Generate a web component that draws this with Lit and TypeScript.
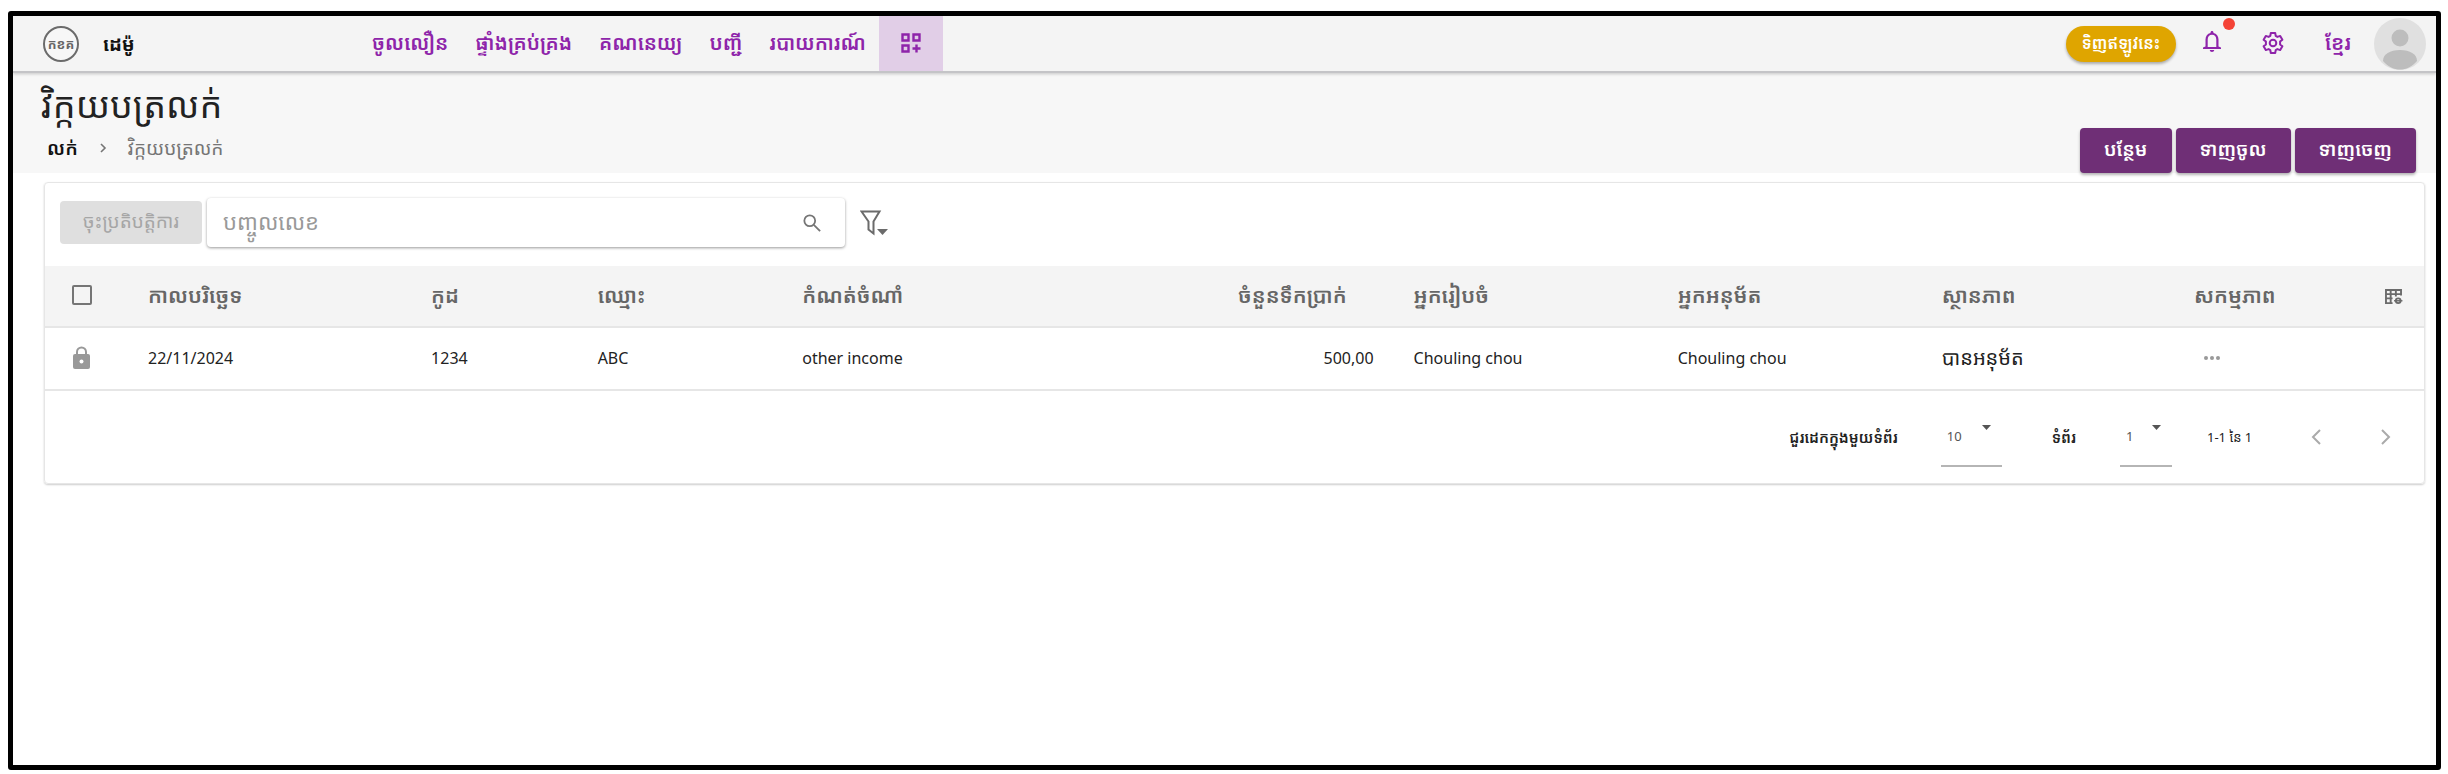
import { LitElement, html, css } from "lit";
import { customElement, state } from "lit/decorators.js";

const COLUMNS = [
  { key: "date", label: "កាលបរិច្ឆេទ" },
  { key: "code", label: "កូដ" },
  { key: "name", label: "ឈ្មោះ" },
  { key: "memo", label: "កំណត់ចំណាំ" },
  { key: "amount", label: "ចំនួនទឹកប្រាក់" },
  { key: "preparer", label: "អ្នករៀបចំ" },
  { key: "approver", label: "អ្នកអនុម័ត" },
  { key: "status", label: "ស្ថានភាព" },
];

const ROWS: Record<string, string>[] = [
  {
    date: "22/11/2024",
    code: "1234",
    name: "ABC",
    memo: "other income",
    amount: "500,00",
    preparer: "Chouling chou",
    approver: "Chouling chou",
    status: "បានអនុម័ត",
  },
];

const NAV = ["ចូលលឿន", "ផ្ទាំងគ្រប់គ្រង", "គណនេយ្យ", "បញ្ជី", "របាយការណ៍"];

@customElement("app-root")
export class AppRoot extends LitElement {
  @state() private query = "";

  static styles = css`
    :host {
      display: block;
      box-sizing: border-box;
      min-height: 100vh;
      padding: 11px 7px 4px 8px;
      background: #fff;
      color: #222;
      font-family: "Noto Sans", "Noto Sans Khmer", sans-serif;
      font-size: 16px;
      line-height: 24px;
    }
    * { box-sizing: border-box; }
    button, input, select { font: inherit; color: inherit; margin: 0; }
    button { display: block; border: 0; background: none; padding: 0; cursor: pointer; white-space: nowrap; }
    a { color: inherit; text-decoration: none; }
    svg { display: block; }
    .frame {
      min-height: calc(100vh - 15px);
      border: 5px solid #000;
      border-radius: 3px;
    }
    .bar {
      position: relative;
      display: flex;
      align-items: center;
      height: 57px;
      padding: 0 10px 0 30px;
      border-bottom: 2px solid #c4c4c7;
      background: #f4f4f4;
      box-shadow: 0 1px 3px rgba(0, 0, 0, 0.2);
    }
    .brand {
      display: flex;
      align-items: center;
      gap: 24px;
      width: 329px;
      color: #111;
      font-size: 19px;
      font-weight: 700;
    }
    .logo {
      display: grid;
      place-items: center;
      width: 36px;
      height: 36px;
      border: 2px solid #6b6b6b;
      border-radius: 50%;
      background: #f7f7f7;
      color: #666;
      font-size: 13px;
    }
    nav {
      display: flex;
      align-items: center;
      align-self: stretch;
      gap: 27px;
      color: #8e24aa;
      font-size: 20px;
      font-weight: 600;
      white-space: nowrap;
    }
    nav a, .lang { padding-bottom: 2px; }
    .more {
      display: grid;
      place-items: center;
      align-self: stretch;
      width: 64px;
      margin-left: -14px;
      padding-bottom: 2px;
      background: #e1cee7;
      color: #8e24aa;
    }
    .tools {
      display: flex;
      align-items: center;
      margin-left: auto;
      color: #8e24aa;
    }
    .buy {
      width: 110px;
      height: 36px;
      margin-right: 24px;
      padding-bottom: 2px;
      border-radius: 18px;
      background: #dfa500;
      box-shadow: 0 2px 3px rgba(0, 0, 0, 0.3);
      color: #fff;
      font-weight: 600;
    }
    .bell { position: relative; margin-right: 37px; }
    .dot {
      position: absolute;
      top: -12px;
      right: -11px;
      width: 12px;
      height: 12px;
      border-radius: 50%;
      background: #f44336;
    }
    .gear { margin-right: 40px; padding-bottom: 2px; }
    .lang { width: 24px; margin-right: 25px; font-size: 20px; font-weight: 600; }
    .head {
      display: flex;
      align-items: flex-end;
      justify-content: space-between;
      padding: 4px 20px 0 28px;
      background: #f7f7f7;
    }
    h1 {
      margin: 0;
      color: #222;
      font-size: 36px;
      font-weight: 400;
      line-height: 56px;
    }
    .crumbs {
      display: flex;
      align-items: center;
      height: 26px;
      margin: 2px 0 12px;
      padding-left: 6px;
      gap: 21px;
      color: #757575;
      font-size: 19px;
    }
    .crumbs a { color: #111; font-weight: 600; }
    .actions { display: flex; gap: 4px; }
    .primary {
      height: 45px;
      padding: 0 24px 4px;
      border-radius: 4px;
      background: #6f2f76;
      box-shadow: 0 2px 3px rgba(0, 0, 0, 0.3);
      color: #fff;
      font-size: 19px;
      font-weight: 600;
    }
    .card {
      margin: 9px 11px 0 31px;
      border: 1px solid #e6e6e6;
      border-radius: 4px;
      box-shadow: 0 1px 2px rgba(0, 0, 0, 0.2);
    }
    .filters {
      display: flex;
      align-items: center;
      height: 83px;
      padding: 0 15px 4px;
    }
    .batch {
      width: 142px;
      height: 43px;
      padding-bottom: 4px;
      border-radius: 4px;
      background: #dfdfdf;
      color: #a6a6a6;
      font-size: 19px;
    }
    .search {
      display: flex;
      align-items: center;
      width: 638px;
      height: 49px;
      margin: 0 15px 0 5px;
      padding: 0 24px 0 16px;
      border-radius: 4px;
      background: #fff;
      box-shadow: 0 1px 3px rgba(0, 0, 0, 0.4);
      color: #757575;
    }
    .search input {
      flex: 1;
      min-width: 0;
      height: 48px;
      padding: 0 0 4px;
      border: 0;
      outline: 0;
      background: none;
      color: #222;
      font-size: 22px;
      line-height: 44px;
    }
    .search input::placeholder { color: #999; opacity: 1; line-height: 44px; overflow: visible; }
    .grey { color: #6b6b6b; }
    table {
      width: 100%;
      table-layout: fixed;
      border-collapse: collapse;
    }
    th, td {
      padding: 0 0 2px 15px;
      border-bottom: 2px solid #e6e6e6;
      text-align: left;
      white-space: nowrap;
    }
    th {
      height: 61px;
      background: #f4f4f4;
      color: #666;
      font-size: 21px;
      font-weight: 600;
    }
    td { height: 63px; }
    .c-check { width: 3.7%; }
    .c-date { width: 11.9%; }
    .c-code { width: 7%; }
    .c-name { width: 8.6%; }
    .c-memo { width: 12.6%; }
    .c-amount { width: 13.1%; }
    .c-preparer { width: 11.1%; }
    .c-approver { width: 11.1%; }
    .c-status { width: 10.6%; }
    .c-action { width: 7.6%; }
    td.amount, th.amount { padding-right: 25px; text-align: right; }
    th.amount { padding-right: 52px; }
    td.status { font-size: 20px; }
    .check { padding-left: 27px; }
    .check input {
      display: block;
      appearance: none;
      width: 20px;
      height: 20px;
      border: 2px solid #757575;
      border-radius: 2px;
    }
    .check input:checked { background: #6f2f76; }
    .lock { color: #999; }
    .dots { padding-left: 25px; }
    .config { padding: 2px 0 0 24px; }
    .pager {
      display: flex;
      align-items: center;
      justify-content: flex-end;
      height: 92px;
      padding-right: 33px;
      font-size: 13px;
    }
    .pager label { display: flex; align-items: center; font-size: 15px; font-weight: 600; }
    .pick {
      display: flex;
      align-items: flex-start;
      height: 60px;
      border-bottom: 2px solid #b5b5b5;
      color: #555;
      font-size: 13px;
      font-weight: 400;
    }
    .pick.size { width: 61px; margin: 0 50px 0 43px; }
    .pick.page { width: 52px; margin: 0 35px 0 44px; }
    .pick select {
      appearance: none;
      flex: 1;
      min-width: 0;
      height: 58px;
      padding: 0 0 0 6px;
      border: 0;
      background: none;
    }
    .pick svg { margin: 18px 11px 0 0; }
    .range { width: 42px; white-space: nowrap; }
    .prev { margin: 0 60px 0 62px; color: #aaa; }
    .next { color: #aaa; }
  `;

  render() {
    return html`
      <div class="frame">
        <header class="bar">
          <div class="brand"><span class="logo">កខគ</span><span>ដេម៉ូ</span></div>
          <nav>
            ${NAV.map((label) => html`<a href="#">${label}</a>`)}
            <button class="more" aria-label="Apps">
              <svg width="20" height="20" viewBox="0 0 20 20" fill="none" stroke="currentColor" stroke-width="2.4">
                <path d="M1.500 1.500h6v6h-6zM12.500 1.500h6v6h-6zM1.500 12.500h6v6h-6zM15.500 11.500v8M11.500 15.500h8" />
              </svg>
            </button>
          </nav>
          <div class="tools">
            <button class="buy">ទិញឥឡូវនេះ</button>
            <button class="bell" aria-label="Notifications">
              <svg width="24" height="28" viewBox="0 1 24 28" fill="currentColor">
                <path d="M12 23c1.200 0 2.200-.9 2.200-2H9.800c0 1.100 1 2 2.200 2zm6.500-5.500V10.500c0-3.300-1.900-5.900-5-6.600V3.500c0-.8-.7-1.500-1.500-1.500s-1.500.7-1.500 1.500v.4c-3.100.7-5 3.300-5 6.600v7L3 18.500V20h18v-1.500zm-2.200.5H7.700v-7.500c0-2.800 1.700-4.800 4.300-4.800s4.300 2 4.300 4.800z" />
              </svg>
              <span class="dot"></span>
            </button>
            <button class="gear" aria-label="Settings">
              <svg width="24" height="24" viewBox="0 0 24 24" fill="none" stroke="currentColor" stroke-width="2" stroke-linejoin="round">
                <path d="M9.800 2h4.400l.5 2.900 1.700 1 2.800-1 2.200 3.800-2.300 1.900v2.800l2.300 1.900-2.200 3.800-2.800-1-1.700 1-.5 2.900H9.800l-.5-2.900-1.700-1-2.800 1-2.200-3.800 2.300-1.900v-2.800L2.600 8.700l2.200-3.800 2.800 1 1.700-1z" />
                <circle cx="12" cy="12" r="3.300" />
              </svg>
            </button>
            <button class="lang">ខ្មែរ</button>
            <button aria-label="Account">
              <svg width="52" height="52" viewBox="0 0 52 52">
                <circle cx="26" cy="26" r="26" fill="#e0e0e0" />
                <circle cx="26" cy="20" r="8.500" fill="#bdbdbd" />
                <path d="M9 43c0-7 7-11 17-11s17 4 17 11c-5 6-11 8.500-17 8.500S14 49 9 43z" fill="#bdbdbd" />
              </svg>
            </button>
          </div>
        </header>
        <section class="head">
          <div>
            <h1>វិក្កយបត្រលក់</h1>
            <div class="crumbs">
              <a href="#">លក់</a>
              <svg width="8" height="10" viewBox="0 0 8 10" fill="none" stroke="currentColor" stroke-width="1.600"><path d="M2 1l4 4-4 4" /></svg>
              <span>វិក្កយបត្រលក់</span>
            </div>
          </div>
          <div class="actions">
            <button class="primary">បន្ថែម</button>
            <button class="primary">ទាញចូល</button>
            <button class="primary">ទាញចេញ</button>
          </div>
        </section>
        <main class="card">
          <div class="filters">
            <button class="batch" disabled>ចុះប្រតិបត្តិការ</button>
            <div class="search">
              <input type="text" aria-label="បញ្ចូលលេខ" placeholder="បញ្ចូលលេខ" .value=${this.query}
                @input=${(e: Event) => (this.query = (e.target as HTMLInputElement).value)} />
              <svg width="18" height="18" viewBox="0 0 20 20" fill="none" stroke="currentColor" stroke-width="2">
                <circle cx="7.500" cy="7.500" r="6" /><path d="M12 12l7 7" />
              </svg>
            </div>
            <button class="grey" aria-label="Filter">
              <svg width="28" height="26" viewBox="0 0 28 26" fill="none" stroke="currentColor" stroke-width="2">
                <path d="M1.500 1.500h18l-6 10v12l-5-4v-8z" /><path d="M17 19h11l-5.500 6z" fill="currentColor" stroke="none" />
              </svg>
            </button>
          </div>
          <table>
            <colgroup>
              <col class="c-check" />
              ${COLUMNS.map((c) => html`<col class="c-${c.key}" />`)}
              <col class="c-action" />
              <col />
            </colgroup>
            <thead>
              <tr>
                <th class="check"><input type="checkbox" aria-label="Select all" /></th>
                ${COLUMNS.map((c) => html`<th class=${c.key}>${c.label}</th>`)}
                <th>សកម្មភាព</th>
                <th class="config">
                  <button class="grey" aria-label="Columns">
                    <svg width="19" height="16" viewBox="0 0 20 17" fill="none" stroke="currentColor" stroke-width="2">
                      <path d="M9 15H2V1h16v6M2 5.500h16M2 10h7M7 1v14M12.500 1v7" />
                      <circle cx="15" cy="12.500" r="2.500" /><path d="M10.500 12.500h9" stroke-width="1.500" />
                    </svg>
                  </button>
                </th>
              </tr>
            </thead>
            <tbody>
              ${ROWS.map(
                (row) => html`
                  <tr>
                    <td class="check lock">
                      <svg width="19" height="24" viewBox="0 0 19 24">
                        <rect x="1" y="8" width="17" height="15" rx="2" fill="currentColor" />
                        <path d="M5 9V6a4.500 4.500 0 0 1 9 0v3" fill="none" stroke="currentColor" stroke-width="2" />
                        <circle cx="9.500" cy="15.500" r="2" fill="#fff" />
                      </svg>
                    </td>
                    ${COLUMNS.map((c) => html`<td class=${c.key}>${row[c.key]}</td>`)}
                    <td class="dots lock">
                      <button aria-label="More">
                        <svg width="16" height="4" viewBox="0 0 16 4" fill="#999">
                          <circle cx="2" cy="2" r="2" /><circle cx="8" cy="2" r="2" /><circle cx="14" cy="2" r="2" />
                        </svg>
                      </button>
                    </td>
                    <td></td>
                  </tr>
                `
              )}
            </tbody>
          </table>
          <footer class="pager">
            <label>ជួរដេកក្នុងមួយទំព័រ
              <span class="pick size">
                <select><option>10</option><option>25</option></select>
                <svg width="9" height="5" viewBox="0 0 9 5" fill="currentColor"><path d="M0 0h9L4.500 5z" /></svg>
              </span>
            </label>
            <label>ទំព័រ
              <span class="pick page">
                <select><option>1</option></select>
                <svg width="9" height="5" viewBox="0 0 9 5" fill="currentColor"><path d="M0 0h9L4.500 5z" /></svg>
              </span>
            </label>
            <span class="range">1-1 នៃ 1</span>
            <button class="prev" aria-label="Previous page">
              <svg width="10" height="16" viewBox="0 0 10 16" fill="none" stroke="currentColor" stroke-width="2"><path d="M9 1L2 8l7 7" /></svg>
            </button>
            <button class="next" aria-label="Next page">
              <svg width="10" height="16" viewBox="0 0 10 16" fill="none" stroke="currentColor" stroke-width="2"><path d="M1 1l7 7-7 7" /></svg>
            </button>
          </footer>
        </main>
      </div>
    `;
  }
}
